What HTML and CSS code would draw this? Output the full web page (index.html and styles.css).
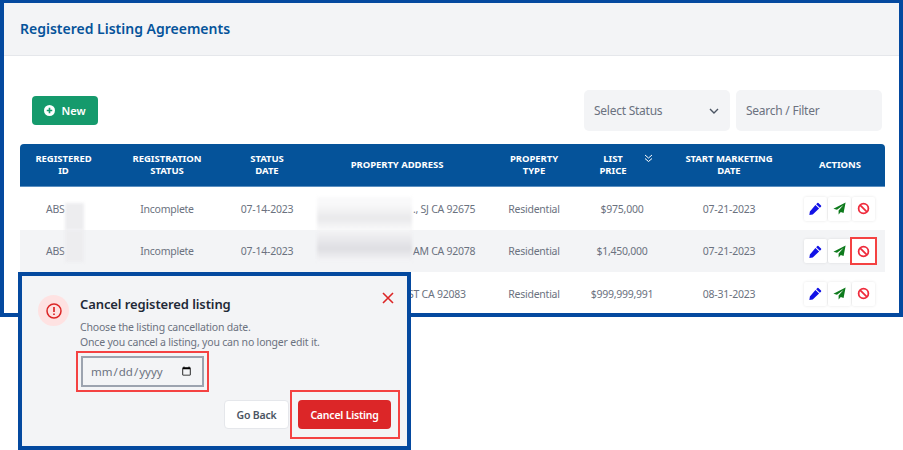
FILE: index.html
```html
<!DOCTYPE html>
<html lang="en">
<head>
<meta charset="utf-8">
<title>Registered Listing Agreements</title>
<link rel="stylesheet" href="styles.css">
</head>
<body>
<svg class="defs" width="0" height="0" aria-hidden="true">
  <symbol id="i-pen" viewBox="0 0 16 16"><path d="M11.600 1.200l3.200 3.200a1 1 0 0 1 0 1.300l-1.500 1.500-4.500-4.500 1.500-1.500a1 1 0 0 1 1.300 0zM7.900 3.600l4.500 4.500-7.800 7.200-4.200.7.700-4.400z" fill="currentColor"/></symbol>
  <symbol id="i-plane" viewBox="0 0 16 16"><path d="M15.500.5L.5 8.200l4.400 1.200 8-5.800-6 7v4.900l2.700-3.200 3.400 1.300z" fill="currentColor"/></symbol>
  <symbol id="i-ban" viewBox="0 0 16 16"><circle cx="8" cy="8" r="6" fill="none" stroke="currentColor" stroke-width="2.200"/><path d="M3.800 3.800l8.400 8.400" stroke="currentColor" stroke-width="2.200"/></symbol>
</svg>
<main class="frame">
  <header class="head"><h1>Registered Listing Agreements</h1></header>
  <section class="tools">
    <button class="new" type="button">
      <svg width="11" height="11" viewBox="0 0 12 12"><circle cx="6" cy="6" r="6" fill="#fff"/><path d="M6 3v6M3 6h6" stroke="#159a6c" stroke-width="1.800"/></svg>
      New
    </button>
    <div class="filters">
      <div class="field select"><span>Select Status</span>
        <svg width="12" height="12" viewBox="0 0 12 12"><path d="M2 4l4 4 4-4" fill="none" stroke="#4b5563" stroke-width="1.400"/></svg>
      </div>
      <div class="field"><span>Search / Filter</span></div>
    </div>
  </section>
  <div class="table">
    <div class="row th">
      <div>REGISTERED<br>ID</div>
      <div>REGISTRATION<br>STATUS</div>
      <div>STATUS<br>DATE</div>
      <div>PROPERTY ADDRESS</div>
      <div>PROPERTY<br>TYPE</div>
      <div class="price-h"><span>LIST<br>PRICE</span>
        <svg class="sort" width="9" height="9" viewBox="0 0 9 9"><path d="M1 1l3.500 3 3.500-3M1 4.500l3.500 3 3.500-3" fill="none" stroke="#fff" stroke-width="1"/></svg>
      </div>
      <div>START MARKETING<br>DATE</div>
      <div>ACTIONS</div>
    </div>
    <div class="row td">
      <div class="id"><span>ABS</span><i class="mask m-id m-low"></i></div>
      <div>Incomplete</div>
      <div>07-14-2023</div>
      <div class="addr"><i class="mask m-addr m-light"></i><span>., SJ CA 92675</span></div>
      <div>Residential</div>
      <div>$975,000</div>
      <div>07-21-2023</div>
      <div class="acts">
        <span class="act blue"><svg width="13" height="13"><use href="#i-pen"/></svg></span>
        <span class="act green"><svg width="13" height="13"><use href="#i-plane"/></svg></span>
        <span class="act red"><svg width="13" height="13"><use href="#i-ban"/></svg></span>
      </div>
    </div>
    <div class="row td alt">
      <div class="id"><span>ABS</span><i class="mask m-id m-high"></i></div>
      <div>Incomplete</div>
      <div>07-14-2023</div>
      <div class="addr"><i class="mask m-addr m-dark"></i><span>AM CA 92078</span></div>
      <div>Residential</div>
      <div>$1,450,000</div>
      <div>07-21-2023</div>
      <div class="acts">
        <span class="act blue"><svg width="13" height="13"><use href="#i-pen"/></svg></span>
        <span class="act green"><svg width="13" height="13"><use href="#i-plane"/></svg></span>
        <span class="act red mark"><svg width="13" height="13"><use href="#i-ban"/></svg></span>
      </div>
    </div>
    <div class="row td">
      <div></div>
      <div></div>
      <div></div>
      <div class="addr tail"><span>ST CA 92083</span></div>
      <div>Residential</div>
      <div>$999,999,991</div>
      <div>08-31-2023</div>
      <div class="acts">
        <span class="act blue"><svg width="13" height="13"><use href="#i-pen"/></svg></span>
        <span class="act green"><svg width="13" height="13"><use href="#i-plane"/></svg></span>
        <span class="act red"><svg width="13" height="13"><use href="#i-ban"/></svg></span>
      </div>
    </div>
  </div>
</main>
<aside class="modal">
  <div class="alert">
    <svg width="16" height="16" viewBox="0 0 16 16"><circle cx="8" cy="8" r="7" fill="none" stroke="#dc2626" stroke-width="1.500"/><path d="M8 4v5M8 10.500v1.500" stroke="#dc2626" stroke-width="1.700"/></svg>
  </div>
  <div class="body">
    <h2>Cancel registered listing</h2>
    <p>Choose the listing cancellation date.<br>Once you cancel a listing, you can no longer edit it.</p>
    <input class="date" type="date" aria-label="Cancellation date">
    <div class="btns">
      <button class="back" type="button">Go Back</button>
      <span class="cancel-wrap"><button class="cancel" type="button">Cancel Listing</button></span>
    </div>
  </div>
  <svg class="close" width="14" height="14" viewBox="0 0 14 14"><path d="M2 2l10 10M12 2L2 12" stroke="#dc2626" stroke-width="1.600"/></svg>
</aside>
</body>
</html>
```
FILE: styles.css
```css
* { box-sizing: border-box; }
html, body { margin: 0; padding: 0; }
body {
  position: relative;
  width: 903px;
  height: 450px;
  overflow: hidden;
  background: #fff;
  font-family: "Noto Sans", "Open Sans", sans-serif;
  color: #6b7280;
}
.defs { position: absolute; }
.frame {
  height: 317px;
  border: 4px solid #04499f;
  border-top-width: 3px;
  overflow: hidden;
  background: #fff;
}
.head {
  height: 53px;
  background: #f3f4f6;
  border-bottom: 1px solid #e5e7eb;
  padding: 0 0 2px 16px;
  display: flex;
  align-items: center;
}
h1 {
  margin: 0;
  font-size: 14px;
  font-weight: 600;
  color: #05539a;
}
.tools {
  height: 88px;
  padding: 34px 17px 0 28px;
  display: flex;
  justify-content: space-between;
  align-items: flex-start;
}
.new {
  margin-top: 6px;
  width: 66px;
  height: 29px;
  border: 0;
  border-radius: 4px;
  background: #159a6c;
  color: #fff;
  font: 600 11px "Noto Sans", sans-serif;
  display: flex;
  align-items: center;
  justify-content: center;
  gap: 6px;
}
.filters { display: flex; gap: 6px; }
.field {
  width: 146px;
  height: 41px;
  background: #f3f4f6;
  border-radius: 5px;
  padding: 0 10px;
  display: flex;
  align-items: center;
  justify-content: space-between;
  font-size: 12px;
  letter-spacing: -.25px;
  color: #6b7280;
}
.table { width: 865px; margin-left: 16px; }
.row {
  display: grid;
  grid-template-columns: 87px 120px 80px 180px 94px 82px 132px 90px;
  align-items: center;
  text-align: center;
}
.th {
  height: 43px;
  background: #05539a;
  border-radius: 4px 4px 0 0;
  border-bottom: 1px solid #5b8fc0;
  color: #fff;
  font-size: 9.500px;
  font-weight: 700;
  line-height: 12px;
  letter-spacing: -.05px;
}
.price-h { display: flex; justify-content: center; padding-right: 18px; position: relative; }
.sort { position: absolute; right: 10px; top: 1px; }
.td { height: 43px; font-size: 10.500px; letter-spacing: -.25px; background: #fff; color: #6b7280; }
.td.alt { background: #f3f4f6; height: 42px; }
.id { display: flex; height: 100%; padding-left: 26px; }
.id span { align-self: center; }
.mask { display: block; filter: blur(1.500px); }
.m-id { width: 19px; background: #ededef; }
.m-low { height: 27px; align-self: flex-end; }
.m-high { height: 32px; align-self: flex-start; }
.addr { display: flex; align-items: center; height: 100%; padding-left: 10px; }
.addr.tail { padding-left: 101px; }
.m-addr { width: 95px; height: 33px; margin-right: 1px; }
.m-light { align-self: flex-end; background: linear-gradient(#f9f9fa 20%, #e9e9eb 65%, #f9f9fa); }
.m-dark { align-self: flex-start; height: 31px; background: linear-gradient(#f4f4f6, #dedee2 60%, #f4f4f6); }
.acts { display: flex; justify-content: center; gap: 1px; padding-right: 1px; }
.act {
  width: 23px;
  height: 24px;
  background: #fff;
  border-radius: 2px;
  box-shadow: 0 0 3px rgba(0,0,0,.1);
  display: flex;
  align-items: center;
  justify-content: center;
}
.blue { color: #1212e6; }
.green { color: #0e7a1c; }
.red { color: #ef2b3c; }
.mark { outline: 2px solid #f44242; box-shadow: none; border-radius: 0; }
.modal {
  position: absolute;
  left: 18px;
  top: 272px;
  width: 393px;
  height: 178px;
  border: 4px solid #04499f;
  background: #f3f4f6;
  padding: 19px 16px 0 16px;
  display: flex;
  gap: 11px;
}
.alert {
  flex: none;
  width: 31px;
  height: 31px;
  border-radius: 50%;
  background: #fee2e2;
  display: flex;
  align-items: center;
  justify-content: center;
}
.body { flex: 1; }
h2 {
  margin: -1px 0 0;
  font-size: 13px;
  line-height: 20px;
  font-weight: 600;
  letter-spacing: -.1px;
  color: #1f2937;
}
p {
  margin: 6px 0 0;
  font-size: 10.500px;
  line-height: 15px;
  letter-spacing: -.19px;
  color: #6b7280;
}
.date {
  display: block;
  margin-top: 6px;
  margin-left: 1px;
  width: 123px;
  height: 31px;
  border: 2px solid #9ca3af;
  border-radius: 0;
  background: #f3f4f6;
  padding: 0 8px 0 7px;
  font: 11.500px "Noto Sans", sans-serif;
  color: #6b7280;
  outline: 2px solid #f44242;
  outline-offset: 3px;
}
.btns {
  margin-top: 13px;
  display: flex;
  justify-content: flex-end;
  gap: 9px;
}
.btns button {
  height: 29px;
  border-radius: 4px;
  font: 600 10.500px "Noto Sans", sans-serif;
  letter-spacing: -.2px;
}
.back { width: 65px; background: #fff; border: 1px solid #e5e7eb; color: #4b5563; }
.cancel-wrap { position: relative; display: block; height: 29px; }
.cancel-wrap::after {
  content: "";
  position: absolute;
  inset: -10px -9px -10px -8px;
  border: 2px solid #f44242;
  pointer-events: none;
}
.cancel {
  display: block;
  width: 93px;
  background: #dc2628;
  border: 0;
  color: #fff;
}
.close { position: absolute; left: 359px; top: 15px; }
```
